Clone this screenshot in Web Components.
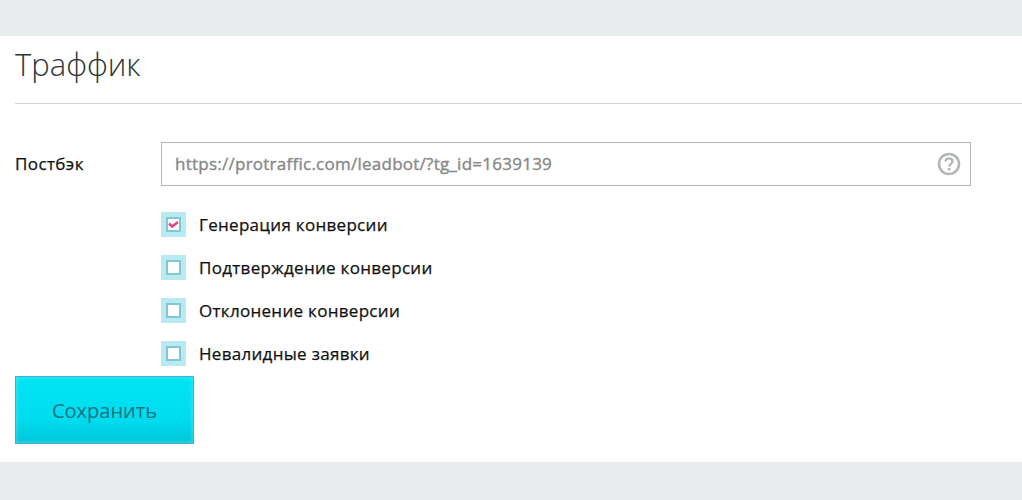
<!DOCTYPE html>
<html>
<head>
<meta charset="utf-8">
<title>Траффик</title>
<style>
html, body { margin: 0; padding: 0; }
body { background: #e9ecec; font-family: "Open Sans", "Liberation Sans", sans-serif; height: 500px; overflow: hidden; padding-top: 36px; box-sizing: border-box; }
</style>
</head>
<body>
<traffic-panel titulo="Траффик">
  <url-field etiqueta="Постбэк" valor="https://protraffic.com/leadbot/?tg_id=1639139"></url-field>
  <check-row texto="Генерация конверсии" checked></check-row>
  <check-row texto="Подтверждение конверсии"></check-row>
  <check-row texto="Отклонение конверсии"></check-row>
  <check-row texto="Невалидные заявки"></check-row>
  <save-button slot="boton">Сохранить</save-button>
</traffic-panel>

<script>
class TrafficPanel extends HTMLElement {
    constructor() {
        super();
        this.shadow = this.attachShadow({mode: 'open'});
    }

    connectedCallback() {
        const titulo = this.getAttribute('titulo') || '';
        this.shadow.innerHTML = `
            <style>
                :host{
                    display: block;
                    background: #fff;
                    height: 426px;
                    padding-left: 15px;
                    box-sizing: border-box;
                }
                h1{
                    margin: 0;
                    height: 68px;
                    box-sizing: border-box;
                    padding-top: 6px;
                    border-bottom: 1px solid #d0d2d2;
                    font-size: 31px;
                    line-height: 44px;
                    font-weight: 300;
                    color: #2b3638;
                }
                .campos{
                    padding-top: 38px;
                    display: flex;
                    flex-direction: column;
                    height: 234px;
                    box-sizing: content-box;
                }
            </style>
            <h1>${titulo}</h1>
            <div class="campos"><slot></slot></div>
            <slot name="boton"></slot>
        `;
    }
}

class UrlField extends HTMLElement {
    constructor() {
        super();
        this.shadow = this.attachShadow({mode: 'open'});
    }

    connectedCallback() {
        this.shadow.innerHTML = `
            <style>
                :host{
                    display: flex;
                    align-items: center;
                    margin-bottom: 26px;
                }
                label{
                    width: 146px;
                    font-size: 17px;
                    letter-spacing: .4px;
                    -webkit-text-stroke: .25px #111;
                    color: #111;
                    padding-bottom: 2px;
                }
                .caja{
                    width: 810px;
                    height: 44px;
                    box-sizing: border-box;
                    border: 1px solid #b4b6b6;
                    display: flex;
                    align-items: center;
                    justify-content: space-between;
                    padding: 0 9px 0 13px;
                    font-size: 17px;
                    letter-spacing: .25px;
                    -webkit-text-stroke: .35px #858888;
                    color: #858888;
                }
                .caja span{ padding-bottom: 2px; }
                svg{ display: block; }
            </style>
            <label>${this.getAttribute('etiqueta')}</label>
            <div class="caja">
                <span>${this.getAttribute('valor')}</span>
                <svg width="24" height="24" viewBox="0 0 24 24">
                    <circle cx="12" cy="12" r="10" fill="none" stroke="#b4b7b7" stroke-width="2.600"/>
                    <path d="M8.600 9.600c0-2 1.500-3.200 3.500-3.200s3.400 1.100 3.400 2.900c0 1.400-.8 2.100-1.800 2.800-.9.600-1.400 1.100-1.400 2.300" fill="none" stroke="#b4b7b7" stroke-width="2.400"/>
                    <rect x="10.800" y="16" width="2.600" height="2.600" fill="#b4b7b7"/>
                </svg>
            </div>
        `;
    }
}

class CheckRow extends HTMLElement {
    constructor() {
        super();
        this.shadow = this.attachShadow({mode: 'open'});
    }

    connectedCallback() {
        const marca = this.hasAttribute('checked')
            ? '<svg width="13" height="13" viewBox="0 0 13 13"><path d="M2 5.500l3.200 3 5.800-4.500" fill="none" stroke="#e0478a" stroke-width="2.600"/></svg>'
            : '';
        this.shadow.innerHTML = `
            <style>
                :host{
                    display: flex;
                    align-items: center;
                    height: 25px;
                    margin-bottom: 18px;
                    padding-left: 146px;
                    font-size: 17px;
                    letter-spacing: .3px;
                    -webkit-text-stroke: .25px #111;
                    color: #111;
                }
                .fondo{
                    width: 25px;
                    height: 25px;
                    background: #b9eaf2;
                    display: flex;
                    align-items: center;
                    justify-content: center;
                    margin-right: 13px;
                }
                .cuadro{
                    width: 15px;
                    height: 15px;
                    box-sizing: border-box;
                    border: 2px solid #82c8d0;
                    background: #fff;
                    display: flex;
                    align-items: center;
                    justify-content: center;
                }
                svg{ display: block; flex: none; }
            </style>
            <span class="fondo"><span class="cuadro">${marca}</span></span>
            <span>${this.getAttribute('texto')}</span>
        `;
    }
}

class SaveButton extends HTMLElement {
    constructor() {
        super();
        this.shadow = this.attachShadow({mode: 'open'});
    }

    connectedCallback() {
        this.shadow.innerHTML = `
            <style>
                :host{
                    display: flex;
                    align-items: center;
                    justify-content: center;
                    width: 179px;
                    height: 68px;
                    box-sizing: border-box;
                    border: 1px solid #3fb0c6;
                    background: linear-gradient(#00e4f4, #00dcef 65%, #00c6da);
                    box-shadow: inset 0 0 4px rgba(255,255,255,.35);
                    color: #17707f;
                    font-size: 20px;
                }
            </style>
            <slot></slot>
        `;
    }
}

customElements.define('traffic-panel', TrafficPanel);
customElements.define('url-field', UrlField);
customElements.define('check-row', CheckRow);
customElements.define('save-button', SaveButton);
</script>
</body>
</html>
